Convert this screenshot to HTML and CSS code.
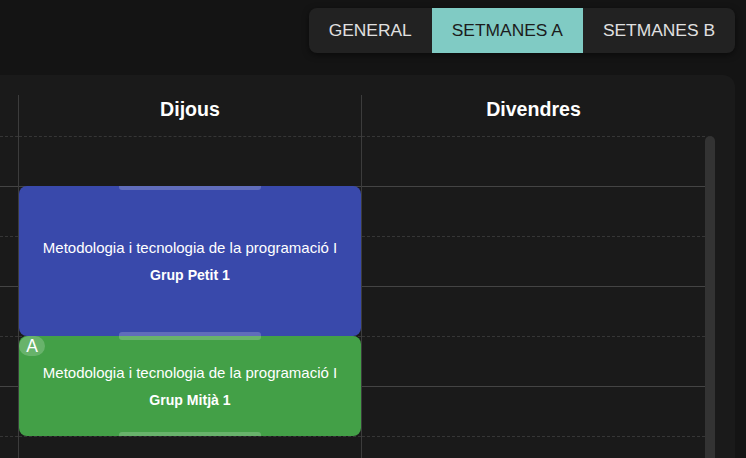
FILE: index.html
```html
<!DOCTYPE html>
<html lang="ca">
<head>
<meta charset="utf-8">
<title>Horari</title>
<link rel="stylesheet" href="styles.css">
</head>
<body>
  <div class="topbar">
    <div class="tabs">
      <div class="tab">GENERAL</div>
      <div class="tab active">SETMANES A</div>
      <div class="tab">SETMANES B</div>
    </div>
  </div>
  <div class="card">
    <div class="header">
      <div class="hcell"></div>
      <div class="hcell day">Dijous</div>
      <div class="hcell day">Divendres</div>
    </div>
    <div class="body">
      <div class="grid">
        <div class="col">
          <div class="slot half"></div><div class="slot"></div><div class="slot half"></div><div class="slot"></div><div class="slot half"></div><div class="slot"></div><div class="slot half"></div>
        </div>
        <div class="col day">
          <div class="slot half"></div><div class="slot"></div><div class="slot half"></div><div class="slot"></div><div class="slot half"></div><div class="slot"></div><div class="slot half"></div>
          <div class="event blue" style="top:50px;height:150px">
            <span class="handle top"></span>
            <div class="title">Metodologia i tecnologia de la programació I</div>
            <div class="group">Grup Petit 1</div>
            <span class="handle bottom"></span>
          </div>
          <div class="event green" style="top:200px;height:100px">
            <span class="handle top"></span>
            <span class="badge">A</span>
            <div class="title">Metodologia i tecnologia de la programació I</div>
            <div class="group">Grup Mitjà 1</div>
            <span class="handle bottom"></span>
          </div>
        </div>
        <div class="col day">
          <div class="slot half"></div><div class="slot"></div><div class="slot half"></div><div class="slot"></div><div class="slot half"></div><div class="slot"></div><div class="slot half"></div>
        </div>
      </div>
      <div class="scrollbar"><div class="thumb"></div></div>
    </div>
  </div>
</body>
</html>
```

FILE: styles.css
```css
* { box-sizing: border-box; }

html, body {
  margin: 0;
  height: 100%;
  overflow: hidden;
}

body {
  background: #141414;
  font-family: "Liberation Sans", Arial, sans-serif;
  color: #fff;
}

.topbar {
  display: flex;
  justify-content: flex-end;
  padding: 8px 11px 0 0;
}

.tabs {
  display: flex;
  height: 45px;
  background: #222222;
  border-radius: 8px;
  overflow: hidden;
  box-shadow: 0 2px 6px rgba(0, 0, 0, 0.5);
}

.tab {
  display: flex;
  align-items: center;
  padding: 0 20px;
  font-size: 17.4px;
  color: #e0e0e0;
}

.tab.active {
  background: #80cbc4;
  color: #1c1c1c;
}

.card {
  margin: 22px 11px 0 0;
  height: calc(100vh - 75px);
  background: #1a1a1a;
  border-top-right-radius: 12px;
  padding: 20px 20px 0 0;
  overflow: hidden;
}

.header {
  display: grid;
  grid-template-columns: 18px 343px 1fr;
  height: 41px;
  margin-right: 10px;
}

.hcell.day {
  border-left: 1px solid #3c3c3c;
  text-align: center;
  font-weight: bold;
  font-size: 19.6px;
  line-height: 23px;
  padding-top: 3px;
  color: #ffffff;
}

.body {
  display: flex;
  align-items: flex-start;
}

.grid {
  flex: 1;
  display: grid;
  grid-template-columns: 18px 343px 1fr;
}

.scrollbar {
  width: 10px;
  flex: none;
}

.thumb {
  height: 360px;
  background: #333333;
  border-radius: 5px;
}

.col {
  position: relative;
}

.col.day {
  border-left: 1px solid #3c3c3c;
}

.slot {
  height: 50px;
  border-top: 1px solid #444444;
}

.slot.half {
  border-top: 1px dashed #363636;
}

.event {
  position: absolute;
  left: 0;
  right: 0;
  border-radius: 8px;
  display: flex;
  flex-direction: column;
  align-items: center;
  justify-content: center;
  text-align: center;
  color: #ffffff;
}

.event.blue { background: #3949ab; }
.event.green { background: #43a047; }

.title {
  font-size: 15px;
  line-height: 18px;
}

.group {
  font-size: 14.1px;
  font-weight: bold;
  line-height: 17px;
  margin-top: 10px;
}

.handle {
  position: absolute;
  left: 50%;
  width: 142px;
  height: 4px;
  margin-left: -71px;
  background: rgba(255, 255, 255, 0.2);
}

.handle.top {
  top: 0;
  border-radius: 0 0 3px 3px;
}

.handle.bottom {
  bottom: 0;
  border-radius: 3px 3px 0 0;
}

.badge {
  position: absolute;
  top: 0;
  left: 0;
  width: 26px;
  height: 20px;
  border-radius: 10px;
  background: rgba(255, 255, 255, 0.2);
  font-size: 17.5px;
  line-height: 20px;
  text-align: center;
  color: #ffffff;
}
```
